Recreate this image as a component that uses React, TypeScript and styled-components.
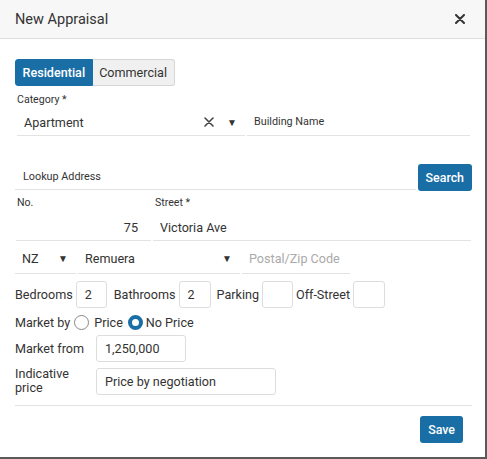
import React from "react";
import styled, { createGlobalStyle } from "styled-components";

const GlobalStyle = createGlobalStyle`
  html, body {
    margin: 0;
    padding: 0;
    background: #fff;
  }
  body {
    font-family: Roboto, "Liberation Sans", Arial, sans-serif;
    color: #333;
  }
`;

const Dialog = styled.div`
  width: 487px;
  height: 459px;
  box-sizing: border-box;
  border-right: 2px solid #5a5a5a;
  border-bottom: 2px solid #5a5a5a;
  background: #fff;
  display: flex;
  flex-direction: column;
`;

const Header = styled.div`
  height: 39px;
  box-sizing: border-box;
  background: #f7f7f7;
  border-bottom: 1px solid #dedede;
  display: flex;
  align-items: center;
  justify-content: space-between;
  padding: 0 20px 0 15px;
`;

const Title = styled.h4`
  margin: 0;
  font-size: 14.5px;
  font-weight: 400;
  color: #333;
`;

const CloseButton = styled.button`
  border: none;
  background: none;
  padding: 0;
  display: flex;
  cursor: pointer;
`;

const Body = styled.div`
  padding: 20px 13px 0 15px;
  display: flex;
  flex-direction: column;
`;

const Toggle = styled.div`
  display: flex;
`;

const ToggleButton = styled.button<{ $active?: boolean }>`
  height: 27px;
  box-sizing: border-box;
  padding: 0 6.5px;
  font-family: inherit;
  font-size: 12.6px;
  border: 1px solid ${(p) => (p.$active ? "#1a6ea6" : "#d6d6d6")};
  background: ${(p) => (p.$active ? "#1a6ea6" : "#f0f0f0")};
  color: ${(p) => (p.$active ? "#fff" : "#333")};
  font-weight: ${(p) => (p.$active ? 500 : 400)};
  border-radius: ${(p) => (p.$active ? "3px 0 0 3px" : "0 3px 3px 0")};
  border-left-width: ${(p) => (p.$active ? "1px" : "0")};
`;

const Label = styled.div<{ $top?: number }>`
  font-size: 10.6px;
  color: #333;
  line-height: 13px;
  padding-left: 2px;
  margin-top: ${(p) => p.$top ?? 0}px;
`;

const Row = styled.div<{ $top?: number }>`
  display: flex;
  align-items: flex-end;
  gap: 2px;
  margin-top: ${(p) => p.$top ?? 0}px;
`;

const Field = styled.div<{ $w?: number; $grow?: boolean; $h?: number; $pt?: number }>`
  display: flex;
  align-items: center;
  height: ${(p) => p.$h ?? 33}px;
  box-sizing: border-box;
  padding-top: ${(p) => p.$pt ?? 0}px;
  border-bottom: 1px solid #e3e3e3;
  width: ${(p) => (p.$w ? `${p.$w}px` : "auto")};
  flex: ${(p) => (p.$grow ? 1 : "none")};
  font-size: 12.6px;
  color: #333;
`;

const FieldText = styled.span<{ $pad?: number; $muted?: boolean; $small?: boolean; $right?: boolean }>`
  flex: 1;
  padding-left: ${(p) => p.$pad ?? 7}px;
  padding-right: ${(p) => (p.$right ? 13 : 0)}px;
  text-align: ${(p) => (p.$right ? "right" : "left")};
  color: ${(p) => (p.$muted ? "#aaa" : "#333")};
  font-size: ${(p) => (p.$small ? 10.8 : 12.6)}px;
  white-space: nowrap;
`;

const Caret = styled.span`
  font-size: 10px;
  color: #333;
  padding-right: 8px;
`;

const ClearIcon = styled.svg`
  width: 10px;
  height: 10px;
  margin-right: 13px;
`;

const LabelRow = styled.div`
  display: flex;
  margin-top: 6px;
`;

const LabelCell = styled(Label)<{ $w: number }>`
  width: ${(p) => p.$w}px;
`;

const PrimaryButton = styled.button`
  height: 27px;
  padding: 0 8px;
  border: none;
  border-radius: 3px;
  background: #1a6ea6;
  color: #fff;
  font-family: inherit;
  font-weight: 500;
  font-size: 12.4px;
  margin-bottom: -1px;
`;

const InlineRow = styled.div<{ $top: number }>`
  display: flex;
  align-items: center;
  margin-top: ${(p) => p.$top}px;
  font-size: 12.6px;
  color: #333;
`;

const InlineLabel = styled.span<{ $gap?: number; $w?: number }>`
  margin-right: ${(p) => p.$gap ?? 3}px;
  width: ${(p) => (p.$w ? `${p.$w}px` : "auto")};
  line-height: 14px;
`;

const Box = styled.div<{ $w: number; $gap?: number }>`
  width: ${(p) => p.$w}px;
  height: 27px;
  box-sizing: border-box;
  border: 1px solid #ddd;
  border-radius: 3px;
  padding: 0 8px;
  display: flex;
  align-items: center;
  margin-right: ${(p) => p.$gap ?? 0}px;
  font-size: 12.6px;
`;

const Radio = styled.span<{ $checked?: boolean; $l?: number; $r?: number }>`
  width: 15px;
  height: 15px;
  box-sizing: border-box;
  border-radius: 50%;
  border: ${(p) => (p.$checked ? "4px solid #1a6ea6" : "1px solid #888")};
  background: #fff;
  margin: 0 ${(p) => p.$r ?? 5}px 0 ${(p) => p.$l ?? 4}px;
`;

const Footer = styled.div`
  margin: 10px 0 0;
  border-top: 1px solid #e3e3e3;
  padding-top: 10px;
  display: flex;
  justify-content: flex-end;
  padding-right: 9px;
`;

const XIcon = ({ size = 10, w = 1.6 }: { size?: number; w?: number }) => (
  <svg width={size} height={size} viewBox="0 0 10 10">
    <path d="M1 1 L9 9 M9 1 L1 9" stroke="#333" strokeWidth={w} strokeLinecap="round" />
  </svg>
);

export default function App() {
  return (
    <>
      <GlobalStyle />
      <Dialog>
        <Header>
          <Title>New Appraisal</Title>
          <CloseButton>
            <XIcon size={10} w={2} />
          </CloseButton>
        </Header>
        <Body>
          <Toggle>
            <ToggleButton $active>Residential</ToggleButton>
            <ToggleButton>Commercial</ToggleButton>
          </Toggle>
          <Label $top={7}>Category *</Label>
          <Row>
            <Field $w={228} $h={30} $pt={3} style={{ marginLeft: 2 }}>
              <FieldText>Apartment</FieldText>
              <ClearIcon viewBox="0 0 10 10">
                <path d="M1 1 L9 9 M9 1 L1 9" stroke="#444" strokeWidth={1.6} strokeLinecap="round" />
              </ClearIcon>
              <Caret>▼</Caret>
            </Field>
            <Field $grow $h={30} $pt={2} style={{ marginRight: 2 }}>
              <FieldText $small>Building Name</FieldText>
            </Field>
          </Row>
          <Row $top={27}>
            <Field $grow $h={27}>
              <FieldText $small $pad={8}>Lookup Address</FieldText>
            </Field>
            <PrimaryButton>Search</PrimaryButton>
          </Row>
          <LabelRow>
            <LabelCell $w={136}>No.</LabelCell>
            <LabelCell $w={200}>Street *</LabelCell>
          </LabelRow>
          <Row>
            <Field $w={135} $h={32} $pt={5} style={{ marginLeft: 1 }}>
              <FieldText $right>75</FieldText>
            </Field>
            <Field $grow $h={32} $pt={5} style={{ marginRight: 1 }}>
              <FieldText>Victoria Ave</FieldText>
            </Field>
          </Row>
          <Row>
            <Field $w={61} $pt={2}>
              <FieldText>NZ</FieldText>
              <Caret>▼</Caret>
            </Field>
            <Field $w={162} $pt={2}>
              <FieldText>Remuera</FieldText>
              <Caret>▼</Caret>
            </Field>
            <Field $w={108} $pt={2}>
              <FieldText $muted>Postal/Zip Code</FieldText>
            </Field>
          </Row>
          <InlineRow $top={7}>
            <InlineLabel>Bedrooms</InlineLabel>
            <Box $w={31} $gap={7}>2</Box>
            <InlineLabel>Bathrooms</InlineLabel>
            <Box $w={32} $gap={6}>2</Box>
            <InlineLabel>Parking</InlineLabel>
            <Box $w={31} $gap={3}></Box>
            <InlineLabel>Off-Street</InlineLabel>
            <Box $w={32}></Box>
          </InlineRow>
          <InlineRow $top={7}>
            <InlineLabel $gap={0}>Market by</InlineLabel>
            <Radio />
            <span>Price</span>
            <Radio $checked $l={5} $r={3} />
            <span>No Price</span>
          </InlineRow>
          <InlineRow $top={5}>
            <InlineLabel $w={81} $gap={0}>Market from</InlineLabel>
            <Box $w={90}>1,250,000</Box>
          </InlineRow>
          <InlineRow $top={5}>
            <InlineLabel $w={81} $gap={0}>
              Indicative
              <br />
              price
            </InlineLabel>
            <Box $w={180}>Price by negotiation</Box>
          </InlineRow>
          <Footer>
            <PrimaryButton>Save</PrimaryButton>
          </Footer>
        </Body>
      </Dialog>
    </>
  );
}
